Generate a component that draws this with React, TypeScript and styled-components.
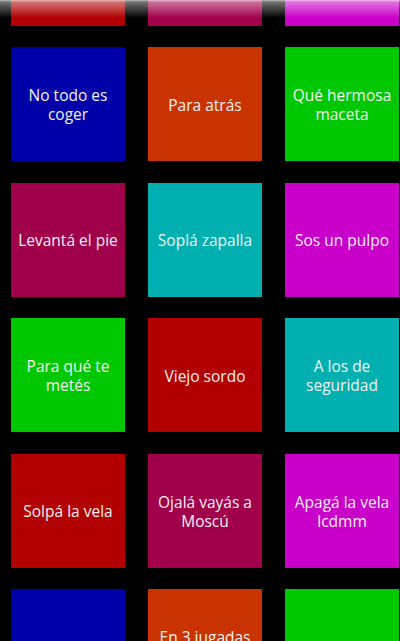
import React from 'react';
import styled, {createGlobalStyle} from 'styled-components';

const GlobalStyle = createGlobalStyle`
  html, body {
    margin: 0;
    padding: 0;
    background: #000;
    overflow: hidden;
  }
  body {
    font-family: "Open Sans", "Noto Sans", "DejaVu Sans", sans-serif;
  }
`

const colors = {
  red: '#b20000',
  crimson: '#a1004b',
  magenta: '#c900c9',
  blue: '#0000ab',
  orange: '#c93300',
  green: '#00c800',
  teal: '#00b0b0',
}

type ColorName = keyof typeof colors;

const Screen = styled.div`
  width: 400px;
  height: 641px;
  overflow: hidden;
  background: #000;
  position: relative;
`
const TileGrid = styled.div`
  display: grid;
  grid-template-columns: repeat(3, 114px);
  grid-auto-rows: 114px;
  column-gap: 23px;
  row-gap: 21.5px;
  padding-left: 11px;
  margin-top: -88.5px;
`
type TileProps = {
  $color: ColorName;
}
const Tile = styled.div<TileProps>`
  background: ${props => colors[props.$color]};
  display: flex;
  align-items: center;
  justify-content: center;
  padding: 2px 6px 0;
  box-sizing: border-box;
  text-align: center;
  color: #f2f2f2;
  font-size: 15.5px;
  line-height: 19px;
`
const EdgeGlow = styled.div`
  position: absolute;
  top: 0;
  left: 0;
  right: 0;
  height: 18px;
  pointer-events: none;
  background: linear-gradient(rgba(255, 255, 255, 0.75) 0px, rgba(255, 255, 255, 0.45) 2px, rgba(255, 255, 255, 0) 18px);
`

// the first row is scrolled up out of view, its labels are never seen
const tiles: {id: number; color: ColorName; text: string}[] = [
  {id: 1, color: 'red', text: ''},
  {id: 2, color: 'crimson', text: ''},
  {id: 3, color: 'magenta', text: ''},
  {id: 4, color: 'blue', text: 'No todo es coger'},
  {id: 5, color: 'orange', text: 'Para atrás'},
  {id: 6, color: 'green', text: 'Qué hermosa maceta'},
  {id: 7, color: 'crimson', text: 'Levantá el pie'},
  {id: 8, color: 'teal', text: 'Soplá zapalla'},
  {id: 9, color: 'magenta', text: 'Sos un pulpo'},
  {id: 10, color: 'green', text: 'Para qué te metés'},
  {id: 11, color: 'red', text: 'Viejo sordo'},
  {id: 12, color: 'teal', text: 'A los de seguridad'},
  {id: 13, color: 'red', text: 'Solpá la vela'},
  {id: 14, color: 'crimson', text: 'Ojalá vayás a Moscú'},
  {id: 15, color: 'magenta', text: 'Apagá la vela lcdmm'},
  {id: 16, color: 'blue', text: 'Hablá bien'},
  {id: 17, color: 'orange', text: 'En 3 jugadas te gano'},
  {id: 18, color: 'green', text: 'Al ladito tuyo'},
]

const App = () => {
  return (
    <>
      <GlobalStyle/>
      <Screen>
        <TileGrid>
          {tiles.map((tile) => (
            <Tile key={tile.id} $color={tile.color}>{tile.text}</Tile>
          ))}
        </TileGrid>
        <EdgeGlow/>
      </Screen>
    </>
  );
};

export default App;
